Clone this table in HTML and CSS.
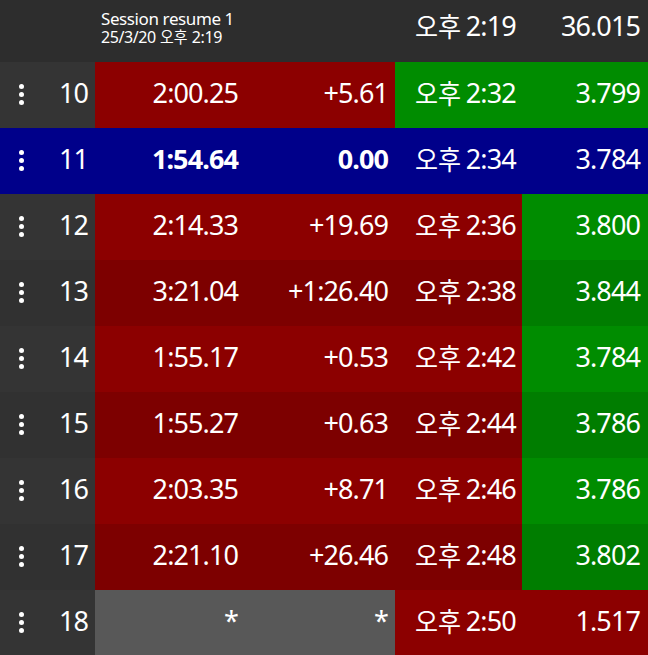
FILE: index.html
```html
<!DOCTYPE html>
<html lang="ko">
<head>
<meta charset="utf-8">
<link rel="stylesheet" href="styles.css">
</head>
<body>
<div class="table">
  <div class="row header">
    <div class="cell"></div>
    <div class="cell"></div>
    <div class="cell session">
      <div class="s-title">Session resume 1</div>
      <div class="s-date">25/3/20 <span class="ko">오후</span> 2:19</div>
    </div>
    <div class="cell clock hclock"><span class="ko">오후</span> 2:19</div>
    <div class="cell last hlast">36.015</div>
  </div>

  <div class="row">
    <div class="cell menu"><span class="dots"><i></i><i></i><i></i></span></div>
    <div class="cell num">10</div>
    <div class="cell time red">2:00.25</div>
    <div class="cell diff red">+5.61</div>
    <div class="cell clock green"><span class="ko">오후</span> 2:32</div>
    <div class="cell last green">3.799</div>
  </div>

  <div class="row best">
    <div class="cell menu"><span class="dots"><i></i><i></i><i></i></span></div>
    <div class="cell num">11</div>
    <div class="cell time bold">1:54.64</div>
    <div class="cell diff bold">0.00</div>
    <div class="cell clock"><span class="ko">오후</span> 2:34</div>
    <div class="cell last">3.784</div>
  </div>

  <div class="row">
    <div class="cell menu"><span class="dots"><i></i><i></i><i></i></span></div>
    <div class="cell num">12</div>
    <div class="cell time red">2:14.33</div>
    <div class="cell diff red">+19.69</div>
    <div class="cell clock red"><span class="ko">오후</span> 2:36</div>
    <div class="cell last green">3.800</div>
  </div>

  <div class="row alt">
    <div class="cell menu"><span class="dots"><i></i><i></i><i></i></span></div>
    <div class="cell num">13</div>
    <div class="cell time red">3:21.04</div>
    <div class="cell diff red">+1:26.40</div>
    <div class="cell clock red"><span class="ko">오후</span> 2:38</div>
    <div class="cell last green">3.844</div>
  </div>

  <div class="row">
    <div class="cell menu"><span class="dots"><i></i><i></i><i></i></span></div>
    <div class="cell num">14</div>
    <div class="cell time red">1:55.17</div>
    <div class="cell diff red">+0.53</div>
    <div class="cell clock red"><span class="ko">오후</span> 2:42</div>
    <div class="cell last green">3.784</div>
  </div>

  <div class="row alt">
    <div class="cell menu"><span class="dots"><i></i><i></i><i></i></span></div>
    <div class="cell num">15</div>
    <div class="cell time red">1:55.27</div>
    <div class="cell diff red">+0.63</div>
    <div class="cell clock red"><span class="ko">오후</span> 2:44</div>
    <div class="cell last green">3.786</div>
  </div>

  <div class="row">
    <div class="cell menu"><span class="dots"><i></i><i></i><i></i></span></div>
    <div class="cell num">16</div>
    <div class="cell time red">2:03.35</div>
    <div class="cell diff red">+8.71</div>
    <div class="cell clock red"><span class="ko">오후</span> 2:46</div>
    <div class="cell last green">3.786</div>
  </div>

  <div class="row alt">
    <div class="cell menu"><span class="dots"><i></i><i></i><i></i></span></div>
    <div class="cell num">17</div>
    <div class="cell time red">2:21.10</div>
    <div class="cell diff red">+26.46</div>
    <div class="cell clock red"><span class="ko">오후</span> 2:48</div>
    <div class="cell last green">3.802</div>
  </div>

  <div class="row">
    <div class="cell menu"><span class="dots"><i></i><i></i><i></i></span></div>
    <div class="cell num">18</div>
    <div class="cell time grey">*</div>
    <div class="cell diff grey">*</div>
    <div class="cell clock red"><span class="ko">오후</span> 2:50</div>
    <div class="cell last red">1.517</div>
  </div>
</div>
</body>
</html>
```

FILE: styles.css
```css
html, body {
  margin: 0;
  padding: 0;
  background: #333333;
}

body {
  width: 648px;
  height: 655px;
  overflow: hidden;
  font-family: "Noto Sans", "Noto Sans CJK KR", sans-serif;
  color: #ffffff;
}

.table {
  display: flex;
  flex-direction: column;
}

.row {
  display: grid;
  grid-template-columns: 44px 51px 150px 150px 127px 126px;
  height: 66px;
  background: #343434;
}

.row.alt {
  background: #313131;
}

.row.header {
  height: 62px;
  background: #2d2d2d;
}

.cell {
  display: flex;
  align-items: center;
  font-size: 27px;
  line-height: 1;
  letter-spacing: -0.9px;
  white-space: pre;
  padding-bottom: 5px;
  box-sizing: border-box;
}

.ko {
  display: inline-block;
  font-family: "Noto Sans CJK KR", sans-serif;
  letter-spacing: 0;
  transform: scaleX(0.93);
  transform-origin: left center;
  margin-right: -5px;
}

.menu {
  justify-content: center;
  padding-right: 2px;
  padding-bottom: 2px;
}

.dots {
  display: flex;
  flex-direction: column;
  gap: 3px;
}

.dots i {
  display: block;
  width: 5px;
  height: 5px;
  border-radius: 50%;
  background: #ffffff;
}

.num {
  justify-content: flex-end;
  padding-right: 7px;
}

.time {
  justify-content: flex-end;
  padding-right: 7px;
}

.diff {
  justify-content: flex-end;
  padding-right: 7px;
}

.clock {
  justify-content: flex-start;
  padding-left: 20px;
}

.last {
  justify-content: flex-end;
  padding-right: 8px;
}

.bold {
  font-weight: 700;
}

.red {
  background: #8c0000;
}

.alt .red {
  background: #7d0000;
}

.green {
  background: #008c00;
}

.alt .green {
  background: #007d00;
}

.grey {
  background: #585858;
}

.best {
  background: #00008a;
}

.header .cell {
  padding-bottom: 11px;
}

.session {
  flex-direction: column;
  align-items: flex-start;
  justify-content: flex-start;
  padding-left: 6px;
  padding-top: 9px;
  grid-column: 3 / span 2;
  letter-spacing: -0.4px;
}

.s-title {
  font-size: 17px;
  line-height: 19px;
}

.s-date {
  font-size: 16px;
  line-height: 17px;
}

.s-date .ko {
  margin-right: -1px;
}
```
